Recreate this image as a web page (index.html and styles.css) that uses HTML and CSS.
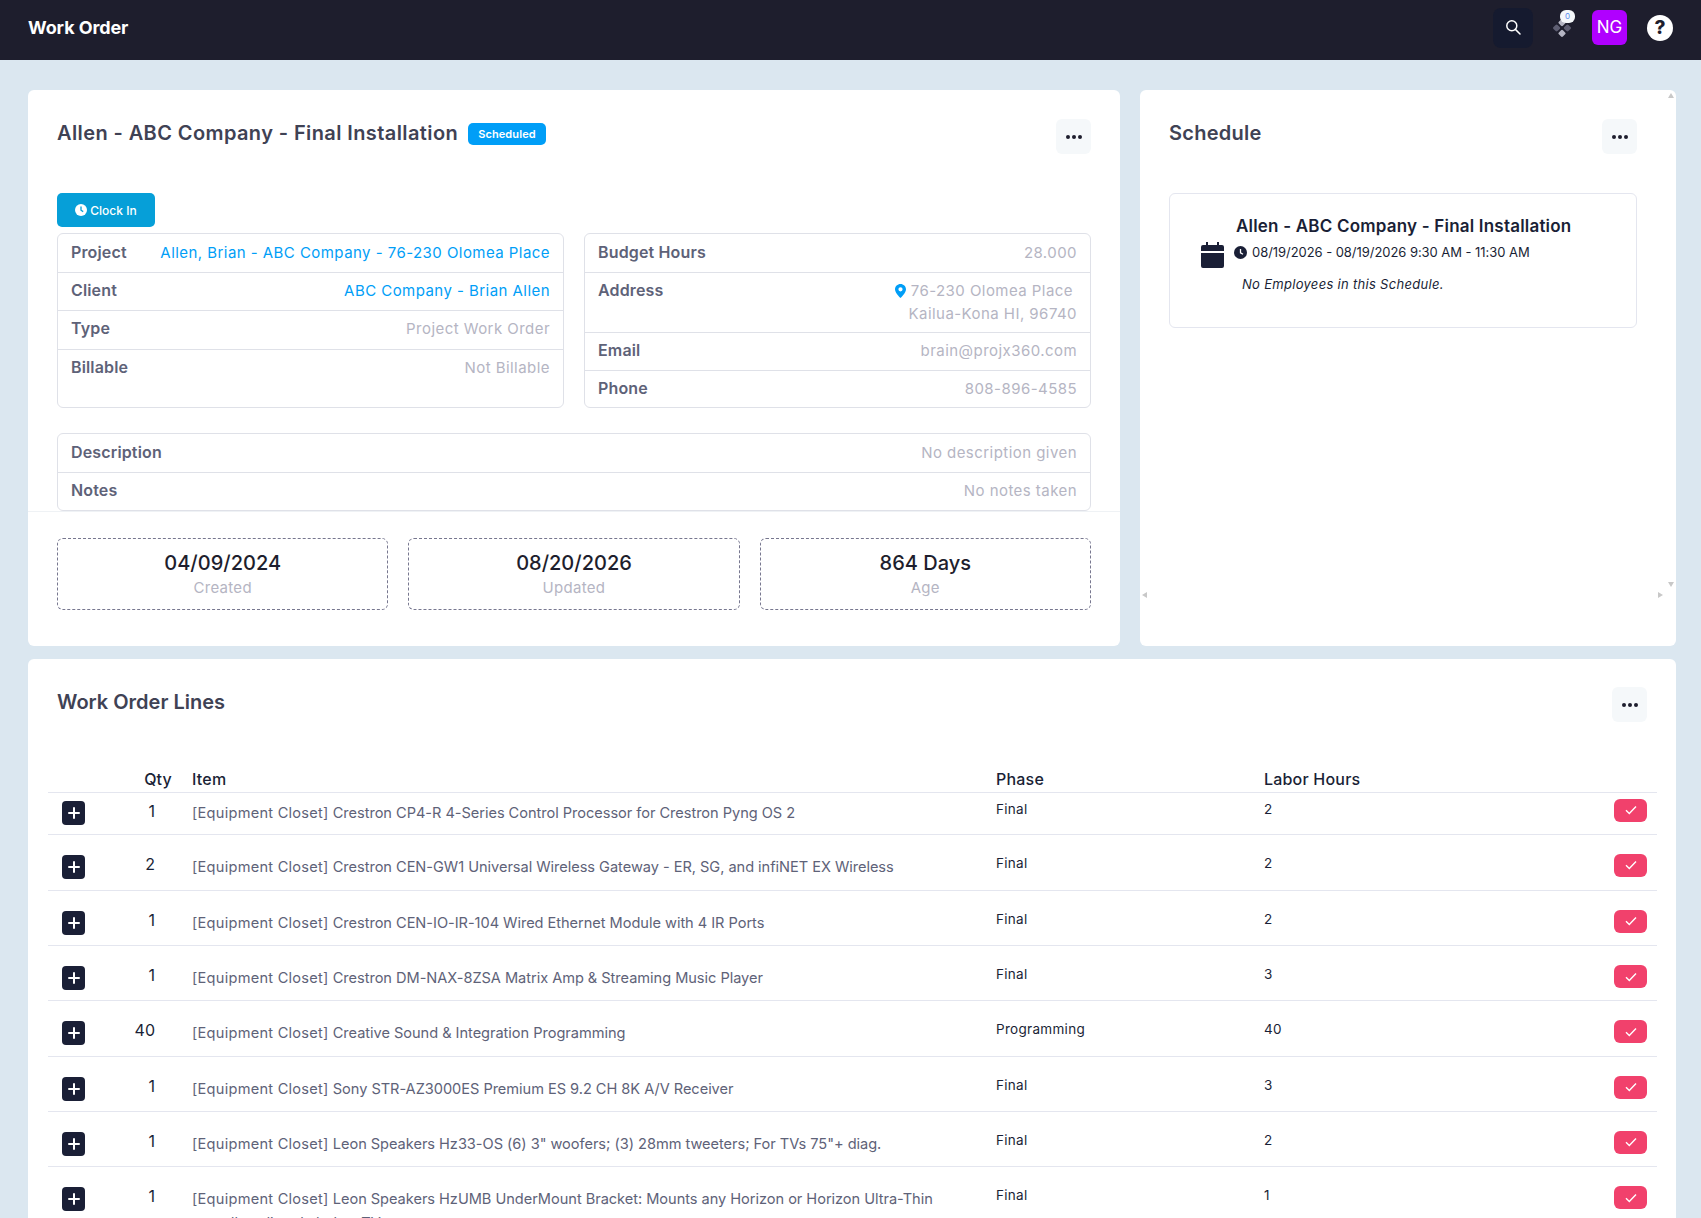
FILE: index.html
```html
<!DOCTYPE html>
<html lang="en">

<head>
    <meta charset="UTF-8" />
    <meta name="viewport" content="width=device-width, initial-scale=1.0" />
    <title>Work Order</title>
    <link rel="stylesheet" href="styles.css">
</head>

<body>
    <header class="topbar">
        <div class="brand">Work Order</div>
        <div class="topbar-tools">
            <button class="search-btn">
                <svg width="16" height="16" viewBox="0 0 16 16" fill="none" stroke="#fff" stroke-width="1.5"><circle cx="6.8" cy="6.8" r="5"/><path d="M10.4 10.4 15 15" stroke-linecap="round"/></svg>
            </button>
            <div class="apps">
                <svg width="18" height="18" viewBox="0 0 20 20"><rect x="6.8" y="0.8" width="6.4" height="6.4" rx="1.5" transform="rotate(45 10 4)" fill="#b5b5c3"/><rect x="0.8" y="6.8" width="6.4" height="6.4" rx="1.5" transform="rotate(45 4 10)" fill="#5e5e72"/><rect x="12.8" y="6.8" width="6.4" height="6.4" rx="1.5" transform="rotate(45 16 10)" fill="#5e5e72"/><rect x="6.8" y="12.8" width="6.4" height="6.4" rx="1.5" transform="rotate(45 10 16)" fill="#b5b5c3"/></svg>
                <span class="apps-count">0</span>
            </div>
            <div class="avatar">NG</div>
            <div class="help">?</div>
        </div>
    </header>

    <main class="page">
        <div class="top-row">
            <section class="card card-main">
                <div class="card-head">
                    <h2 class="card-title">Allen - ABC Company - Final Installation</h2>
                    <span class="badge">Scheduled</span>
                    <button class="dots-btn"><i></i><i></i><i></i></button>
                </div>
                <div class="card-body">
                    <button class="clock-btn">
                        <svg width="12" height="12" viewBox="0 0 12 12"><circle cx="6" cy="6" r="6" fill="#fff"/><path d="M6 2.6V6.2L8.2 7.6" fill="none" stroke="#069fd8" stroke-width="1.3"/></svg>
                        Clock In
                    </button>
                    <div class="info-cols">
                        <div class="info-box">
                            <div class="info-row"><span class="info-label">Project</span><a class="info-link">Allen, Brian - ABC Company - 76-230 Olomea Place</a></div>
                            <div class="info-row"><span class="info-label">Client</span><a class="info-link">ABC Company - Brian Allen</a></div>
                            <div class="info-row"><span class="info-label">Type</span><span class="info-value">Project Work Order</span></div>
                            <div class="info-row info-row-tall"><span class="info-label">Billable</span><span class="info-value">Not Billable</span></div>
                        </div>
                        <div class="info-box">
                            <div class="info-row"><span class="info-label">Budget Hours</span><span class="info-value">28.000</span></div>
                            <div class="info-row info-row-address"><span class="info-label">Address</span>
                                <span class="info-value">
                                    <span class="address-line">
                                        <svg width="11" height="14" viewBox="0 0 11 14"><path fill-rule="evenodd" fill="#009ef7" d="M5.5 0C2.5 0 0 2.4 0 5.4 0 8.8 5.5 14 5.5 14S11 8.8 11 5.4C11 2.4 8.5 0 5.5 0Zm0 7.4a2.1 2.1 0 1 1 0-4.2 2.1 2.1 0 0 1 0 4.2Z"/></svg>
                                        76-230 Olomea Place
                                    </span><br>Kailua-Kona HI, 96740
                                </span>
                            </div>
                            <div class="info-row"><span class="info-label">Email</span><span class="info-value">brain@projx360.com</span></div>
                            <div class="info-row"><span class="info-label">Phone</span><span class="info-value">808-896-4585</span></div>
                        </div>
                    </div>
                    <div class="info-box info-box-wide">
                        <div class="info-row"><span class="info-label">Description</span><span class="info-value">No description given</span></div>
                        <div class="info-row"><span class="info-label">Notes</span><span class="info-value">No notes taken</span></div>
                    </div>
                </div>
                <div class="stats">
                    <div class="stat"><div class="stat-num">04/09/2024</div><div class="stat-label">Created</div></div>
                    <div class="stat"><div class="stat-num">08/20/2026</div><div class="stat-label">Updated</div></div>
                    <div class="stat"><div class="stat-num">864 Days</div><div class="stat-label">Age</div></div>
                </div>
            </section>

            <section class="card card-side">
                <div class="card-head">
                    <h2 class="card-title">Schedule</h2>
                    <button class="dots-btn"><i></i><i></i><i></i></button>
                </div>
                <div class="schedule-box">
                    <svg class="schedule-cal" width="23" height="26" viewBox="0 0 23 26"><path fill="#1a1f36" d="M5 0h2v3h9V0h2v3h3a2 2 0 0 1 2 2v4H0V5a2 2 0 0 1 2-2h3Zm-5 11h23v13a2 2 0 0 1-2 2H2a2 2 0 0 1-2-2Z"/></svg>
                    <div class="schedule-text">
                        <div class="schedule-title">Allen - ABC Company - Final Installation</div>
                        <div class="schedule-when">
                            <svg width="13" height="13" viewBox="0 0 13 13"><circle cx="6.5" cy="6.5" r="6.5" fill="#1a1f36"/><path d="M6.5 3V6.8L9 8.3" fill="none" stroke="#fff" stroke-width="1.3"/></svg>
                            08/19/2026 - 08/19/2026 9:30 AM - 11:30 AM
                        </div>
                        <div class="schedule-none">No Employees in this Schedule.</div>
                    </div>
                </div>
                <span class="arrow arrow-up"></span>
                <span class="arrow arrow-down"></span>
                <span class="arrow arrow-left"></span>
                <span class="arrow arrow-right"></span>
            </section>
        </div>

        <section class="card card-lines">
            <div class="card-head">
                <h2 class="card-title">Work Order Lines</h2>
                <button class="dots-btn"><i></i><i></i><i></i></button>
            </div>
            <table class="lines">
                <thead>
                    <tr><th class="col-plus"></th><th class="col-qty">Qty</th><th class="col-item">Item</th><th class="col-phase">Phase</th><th class="col-hours">Labor Hours</th><th class="col-done"></th></tr>
                </thead>
                <tbody id="lines"></tbody>
            </table>
        </section>
    </main>

    <script>
        const lines = [
            [1, "Crestron CP4-R 4-Series Control Processor for Crestron Pyng OS 2", "Final", 2],
            [2, "Crestron CEN-GW1 Universal Wireless Gateway - ER, SG, and infiNET EX Wireless", "Final", 2],
            [1, "Crestron CEN-IO-IR-104 Wired Ethernet Module with 4 IR Ports", "Final", 2],
            [1, "Crestron DM-NAX-8ZSA Matrix Amp &amp; Streaming Music Player", "Final", 3],
            [40, "Creative Sound &amp; Integration Programming", "Programming", 40],
            [1, "Sony STR-AZ3000ES Premium ES 9.2 CH 8K A/V Receiver", "Final", 3],
            [1, "Leon Speakers Hz33-OS (6) 3\" woofers; (3) 28mm tweeters; For TVs 75\"+ diag.", "Final", 2],
            [1, "Leon Speakers HzUMB UnderMount Bracket: Mounts any Horizon or Horizon Ultra-Thin soundbar directly below TV", "Final", 1]
        ];
        const plus = `<button class="plus-btn"><svg width="12" height="12" viewBox="0 0 12 12"><path d="M6 1v10M1 6h10" stroke="#fff" stroke-width="2" stroke-linecap="round"/></svg></button>`;
        const check = `<button class="done-btn"><svg width="12" height="10" viewBox="0 0 12 10" fill="none"><path d="M1 5.2 4.3 8.4 11 1.4" stroke="#fff" stroke-width="1.4"/></svg></button>`;
        document.getElementById("lines").innerHTML = lines.map(l => `
            <tr>
                <td class="col-plus">${plus}</td>
                <td class="col-qty">${l[0]}</td>
                <td class="col-item"><span class="item-area">[Equipment Closet]</span> ${l[1]}</td>
                <td class="col-phase">${l[2]}</td>
                <td class="col-hours">${l[3]}</td>
                <td class="col-done">${check}</td>
            </tr>`).join("");
    </script>
</body>

</html>
```

FILE: styles.css
```css
* {
    margin: 0;
    padding: 0;
    box-sizing: border-box;
}

html,
body {
    height: 100%;
    overflow: hidden;
}

body {
    background: #dbe7f0;
    font-family: "Inter", "Liberation Sans", sans-serif;
    color: #1a1f36;
}

button {
    border: 0;
    font-family: inherit;
}

.topbar {
    height: 60px;
    background: #1e1e2d;
    display: flex;
    align-items: center;
    justify-content: space-between;
    padding: 0 28px;
}

.brand {
    color: #fff;
    font-size: 18px;
    font-weight: 700;
    letter-spacing: -.1px;
    margin-top: -6px;
}

.topbar-tools {
    display: flex;
    align-items: center;
    margin-top: -4px;
}

.search-btn {
    width: 40px;
    height: 40px;
    border-radius: 8px;
    background: #151a2f;
    display: flex;
    align-items: center;
    justify-content: center;
}

.search-btn svg {
    margin-top: -2px;
}

.apps {
    position: relative;
    width: 18px;
    height: 18px;
    margin-left: 20px;
}

.apps-count {
    position: absolute;
    top: -9px;
    left: 7px;
    width: 15px;
    height: 13px;
    border-radius: 6px;
    background: #f5f8fa;
    color: #5b8def;
    font-size: 8px;
    line-height: 13px;
    text-align: center;
}

.avatar {
    width: 35px;
    height: 35px;
    margin-left: 21px;
    margin-top: -1px;
    border-radius: 6px;
    background: #b000ff;
    color: #fff;
    font-size: 17px;
    line-height: 35px;
    text-align: center;
}

.help {
    width: 26px;
    height: 26px;
    margin-left: 20px;
    border-radius: 50%;
    background: #fff;
    color: #1e1e2d;
    font-size: 19px;
    font-weight: 800;
    line-height: 26px;
    text-align: center;
}

.page {
    padding: 30px 25px 0 28px;
}

.top-row {
    display: flex;
    gap: 20px;
    margin-bottom: 13px;
}

.card {
    position: relative;
    background: #fff;
    border-radius: 6px;
}

.card-main {
    width: 1092px;
    height: 556px;
}

.card-side {
    flex: 1;
    height: 556px;
    padding: 0 39px 0 29px;
}

.card-head {
    display: flex;
    align-items: flex-start;
    gap: 10px;
    height: 103px;
    padding-top: 28px;
}

.card-main .card-head {
    padding-left: 29px;
    padding-right: 29px;
}

.card-title {
    font-size: 20px;
    font-weight: 600;
    letter-spacing: .25px;
    line-height: 30px;
    color: #3f4254;
}

.card-main .card-title {
    letter-spacing: .4px;
}

.card-lines .card-title {
    letter-spacing: 0;
}

.badge {
    margin-top: 5px;
    height: 22px;
    padding: 0 10px;
    border-radius: 5px;
    background: #009ef7;
    color: #fff;
    font-size: 11px;
    font-weight: 600;
    letter-spacing: .1px;
    line-height: 22px;
}

.dots-btn {
    margin-left: auto;
    margin-top: 1px;
    width: 35px;
    height: 35px;
    border-radius: 6px;
    background: #f5f8fa;
    display: flex;
    align-items: center;
    justify-content: center;
    gap: 2px;
}

.dots-btn i {
    width: 4px;
    height: 4px;
    border-radius: 50%;
    background: #1e1e2d;
}

.card-body {
    padding: 0 29px;
    height: 319px;
    border-bottom: 1px solid #eff2f5;
}

.clock-btn {
    display: flex;
    align-items: center;
    justify-content: center;
    gap: 3px;
    width: 98px;
    height: 34px;
    border-radius: 5px;
    background: #069fd8;
    color: #fff;
    font-size: 12px;
    font-weight: 500;
}

.info-cols {
    display: flex;
    gap: 20px;
    margin-top: 6px;
    margin-bottom: 25px;
}

.info-cols .info-box {
    flex: 1;
    height: 175px;
}

.info-box {
    border: 1px solid #dfe1e8;
    border-radius: 6px;
}

.info-box-wide {
    height: 78px;
}

.info-row {
    display: flex;
    justify-content: space-between;
    align-items: flex-start;
    padding: 6px 13px 0;
    height: 38.6px;
    border-bottom: 1px solid #dfe1e8;
}

.info-row:first-child {
    padding-top: 7px;
}

.info-row:last-child {
    border-bottom: 0;
}

.info-row-tall {
    height: 58px;
}

.info-row-address {
    height: 60px;
}

.info-label {
    font-size: 16px;
    font-weight: 600;
    letter-spacing: .15px;
    line-height: 23px;
    color: #5e6278;
}

.info-value,
.info-link {
    font-size: 15px;
    letter-spacing: .45px;
    line-height: 23px;
    text-align: right;
    color: #b5b5c3;
}

.info-link {
    color: #009ef7;
}

.address-line {
    margin-right: 4px;
}

.address-line svg {
    vertical-align: -2px;
}

.stats {
    display: flex;
    gap: 20px;
    padding: 26px 29px 0;
}

.stat {
    flex: 1;
    height: 72px;
    border: 1px dashed #77778f;
    border-radius: 6px;
    text-align: center;
    padding-top: 11px;
}

.stat-num {
    font-size: 20px;
    font-weight: 500;
    line-height: 26px;
    color: #1e1e2d;
}

.stat-label {
    margin-top: 2px;
    font-size: 15px;
    letter-spacing: .3px;
    line-height: 20px;
    color: #b5b5c3;
}

.schedule-box {
    display: flex;
    align-items: center;
    gap: 12px;
    height: 135px;
    padding: 0 0 13px 31px;
    border: 1px solid #e4e6ef;
    border-radius: 6px;
}

.schedule-cal {
    margin-bottom: -1px;
}

.schedule-title {
    font-size: 17px;
    font-weight: 600;
    letter-spacing: .2px;
    line-height: 24px;
    color: #1a1f36;
}

.schedule-when {
    display: flex;
    align-items: center;
    gap: 5px;
    margin-top: 4px;
    margin-left: -2px;
    font-size: 13px;
    letter-spacing: -.05px;
    line-height: 20px;
}

.schedule-none {
    margin-top: 12px;
    margin-left: 6px;
    font-size: 13px;
    font-style: italic;
    letter-spacing: .3px;
    line-height: 20px;
}

.arrow {
    position: absolute;
    width: 0;
    height: 0;
    border: 3px solid transparent;
}

.arrow-up {
    top: 0;
    right: 2px;
    border-top-width: 0;
    border-bottom: 5px solid #c8c8c8;
    margin-top: 3px;
}

.arrow-down {
    top: 492px;
    right: 2px;
    border-bottom-width: 0;
    border-top: 5px solid #c8c8c8;
}

.arrow-left {
    top: 502px;
    left: 2px;
    border-left-width: 0;
    border-right: 5px solid #c8c8c8;
}

.arrow-right {
    top: 502px;
    left: 518px;
    border-right-width: 0;
    border-left: 5px solid #c8c8c8;
}

.card-lines {
    padding: 0 19px 0 20px;
}

.card-lines .card-head {
    padding-left: 9px;
    padding-right: 10px;
    height: 104px;
}

.card-lines .dots-btn {
    margin-top: 0;
}

.lines {
    width: 100%;
    border-collapse: collapse;
    table-layout: fixed;
}

.lines th {
    text-align: left;
    font-size: 16px;
    font-weight: 500;
    letter-spacing: .2px;
    line-height: 24px;
    height: 29px;
    padding-top: 4px;
    vertical-align: top;
    color: #1a1f36;
    border-bottom: 1px solid #e4e6ef;
}

.lines td {
    height: 55.3px;
    vertical-align: top;
    padding-top: 20px;
    border-bottom: 1px solid #e4e6ef;
}

.lines tbody tr:first-child td {
    height: 42px;
    padding-top: 8px;
}

.lines tbody tr:nth-child(2) td {
    height: 56.3px;
}

.col-plus {
    width: 84px;
}

.col-qty {
    width: 60px;
}

.lines th.col-qty {
    text-align: right;
    padding-right: 20px;
}

.lines td.col-qty {
    text-align: right;
    padding-right: 37px;
    padding-top: 19px;
    font-size: 16px;
    line-height: 20px;
}

.col-item {
    width: 804px;
}

.lines td.col-item {
    padding-right: 60px;
    font-size: 14.6px;
    letter-spacing: -.04px;
    line-height: 24px;
    color: #5e6278;
}

.item-area {
    letter-spacing: .25px;
}

.col-phase {
    width: 268px;
}

.lines td.col-phase,
.lines td.col-hours {
    padding-top: 19px;
    font-size: 13.5px;
    letter-spacing: .3px;
    line-height: 18px;
}

.lines tbody tr:first-child td.col-phase,
.lines tbody tr:first-child td.col-hours {
    padding-top: 7px;
}

.col-done {
    width: 120px;
    text-align: right;
}

.lines td.col-done {
    padding-top: 19px;
}

.lines tbody tr:first-child td.col-done {
    padding-top: 6px;
}

.plus-btn {
    display: flex;
    align-items: center;
    justify-content: center;
    width: 23px;
    height: 24px;
    margin-left: 14px;
    border-radius: 4px;
    background: #1a1f36;
}

.done-btn {
    display: inline-flex;
    align-items: center;
    justify-content: center;
    width: 33px;
    height: 23px;
    margin-right: 10px;
    border-radius: 6px;
    background: #f1416c;
}
```
